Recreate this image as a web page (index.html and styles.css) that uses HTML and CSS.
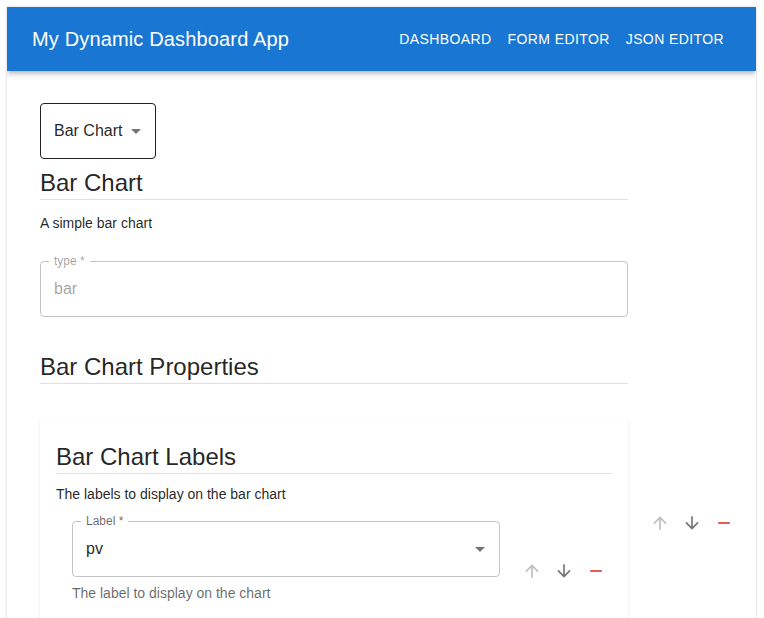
FILE: index.html
```html
<!DOCTYPE html>
<html lang="en">
<head>
<meta charset="utf-8">
<title>My Dynamic Dashboard App</title>
<link rel="stylesheet" href="styles.css">
</head>
<body>
<div class="app">
  <header class="appbar">
    <div class="title">My Dynamic Dashboard App</div>
    <nav class="nav">
      <a class="nav-btn">Dashboard</a>
      <a class="nav-btn">Form Editor</a>
      <a class="nav-btn">JSON Editor</a>
    </nav>
  </header>
  <main class="content">
    <div class="col">
      <div class="select">
        <span class="select-value">Bar Chart</span>
        <svg class="drop" viewBox="0 0 24 24"><path d="M7 10l5 5 5-5z"/></svg>
      </div>
      <h2 class="h5 first">Bar Chart</h2>
      <hr class="divider">
      <p class="desc">A simple bar chart</p>
      <div class="field disabled">
        <span class="flabel">type *</span>
        <span class="fvalue">bar</span>
      </div>
      <h2 class="h5 props">Bar Chart Properties</h2>
      <hr class="divider">
    </div>
    <div class="row">
      <section class="card">
        <h3 class="h5">Bar Chart Labels</h3>
        <hr class="divider">
        <p class="desc card-desc">The labels to display on the bar chart</p>
        <div class="item-row">
          <div class="item">
            <div class="field dark">
              <span class="flabel">Label *</span>
              <span class="fvalue">pv</span>
              <svg class="drop field-drop" viewBox="0 0 24 24"><path d="M7 10l5 5 5-5z"/></svg>
            </div>
            <p class="helper">The label to display on the chart</p>
          </div>
          <div class="actions inner">
            <span class="icon-btn up"><svg viewBox="0 0 24 24"><path d="M4 12l1.41 1.41L11 7.83V20h2V7.83l5.58 5.59L20 12l-8-8-8 8z"/></svg></span>
            <span class="icon-btn down"><svg viewBox="0 0 24 24"><path d="M20 12l-1.41-1.41L13 16.17V4h-2v12.17l-5.58-5.59L4 12l8 8 8-8z"/></svg></span>
            <span class="icon-btn remove"><svg viewBox="0 0 24 24"><path d="M19 13H5v-2h14v2z"/></svg></span>
          </div>
        </div>
      </section>
      <div class="actions outer">
        <span class="icon-btn up"><svg viewBox="0 0 24 24"><path d="M4 12l1.41 1.41L11 7.83V20h2V7.83l5.58 5.59L20 12l-8-8-8 8z"/></svg></span>
        <span class="icon-btn down"><svg viewBox="0 0 24 24"><path d="M20 12l-1.41-1.41L13 16.17V4h-2v12.17l-5.58-5.59L4 12l8 8 8-8z"/></svg></span>
        <span class="icon-btn remove"><svg viewBox="0 0 24 24"><path d="M19 13H5v-2h14v2z"/></svg></span>
      </div>
    </div>
  </main>
</div>
</body>
</html>
```

FILE: styles.css
```css
* { box-sizing: border-box; }

html, body {
  margin: 0;
  background: #fff;
  font-family: "Liberation Sans", Arial, sans-serif;
  color: rgba(0, 0, 0, 0.87);
}

.app {
  margin: 7px 8px 0 7px;
  min-height: 620px;
  background: #fff;
  box-shadow: 0 0 3px rgba(0, 0, 0, 0.14), 0 1px 2px rgba(0, 0, 0, 0.08);
  overflow: hidden;
}

.appbar {
  height: 64px;
  background: #1976d2;
  color: #fff;
  display: flex;
  align-items: center;
  justify-content: space-between;
  padding: 0 24px 0 25px;
  box-shadow: 0 2px 4px -1px rgba(0, 0, 0, 0.2), 0 4px 5px 0 rgba(0, 0, 0, 0.14);
}

.title {
  font-size: 20px;
  letter-spacing: 0.15px;
  line-height: 32px;
}

.nav {
  display: flex;
}

.nav-btn {
  display: block;
  padding: 6px 8px;
  font-size: 14px;
  line-height: 24px;
  letter-spacing: 0.4px;
  text-transform: uppercase;
  color: #fff;
}

.content {
  padding: 32px 33px;
}

.col {
  width: 588px;
}

.select {
  width: 116px;
  height: 56px;
  border: 1px solid rgba(0, 0, 0, 0.87);
  border-radius: 4px;
  display: flex;
  align-items: center;
  padding: 0 7px 0 13px;
  font-size: 16px;
}

.select-value {
  flex: 1;
}

.drop {
  width: 24px;
  height: 24px;
  fill: rgba(0, 0, 0, 0.54);
  flex: none;
}

.h5 {
  margin: 0;
  font-size: 24px;
  line-height: 32px;
  font-weight: 400;
}

.h5.first {
  margin-top: 8px;
}

.h5.props {
  margin-top: 34px;
}

.divider {
  margin: 0;
  border: 0;
  border-top: 1px solid rgba(0, 0, 0, 0.12);
}

.desc {
  margin: 13px 0 0;
  font-size: 14px;
  line-height: 20px;
}

.field {
  position: relative;
  height: 56px;
  margin-top: 28px;
  border: 1px solid rgba(0, 0, 0, 0.23);
  border-radius: 4px;
  display: flex;
  align-items: center;
  padding: 0 7px 0 13px;
  font-size: 16px;
}

.flabel {
  position: absolute;
  top: -8px;
  left: 8px;
  padding: 0 5px;
  background: #fff;
  font-size: 12px;
  line-height: 14px;
  color: rgba(0, 0, 0, 0.6);
}

.field.disabled .flabel,
.field.disabled .fvalue {
  color: rgba(0, 0, 0, 0.38);
}

.fvalue {
  flex: 1;
}

.row {
  display: flex;
  align-items: flex-start;
  margin-top: 34px;
}

.card {
  flex: none;
  width: 588px;
  padding: 23px 16px 16px;
  border-radius: 4px;
  background: #fff;
  box-shadow: 0 1px 3px rgba(0, 0, 0, 0.1), 0 1px 1px rgba(0, 0, 0, 0.06);
  min-height: 260px;
}

.card-desc {
  margin-top: 10px;
}

.item-row {
  display: flex;
  align-items: flex-start;
  margin-top: 1px;
}

.item {
  flex: 1;
  padding: 16px;
  box-shadow: 1px 0 1px -1px rgba(0, 0, 0, 0.03);
}

.item .field {
  margin-top: 0;
}

.field.dark .fvalue {
  color: rgba(0, 0, 0, 0.87);
}

.helper {
  margin: 6px 0 0;
  font-size: 14px;
  line-height: 20px;
  color: rgba(0, 0, 0, 0.6);
}

.actions {
  display: flex;
  flex: none;
}

.actions.inner {
  margin-top: 50px;
}

.actions.outer {
  margin: 89px 0 0 16px;
}

.icon-btn {
  width: 32px;
  height: 32px;
  display: flex;
  align-items: center;
  justify-content: center;
}

.icon-btn svg {
  width: 20px;
  height: 20px;
}

.icon-btn.up svg { fill: rgba(0, 0, 0, 0.26); }
.icon-btn.down svg { fill: rgba(0, 0, 0, 0.54); }
.icon-btn.remove svg { fill: #e53935; }
```
